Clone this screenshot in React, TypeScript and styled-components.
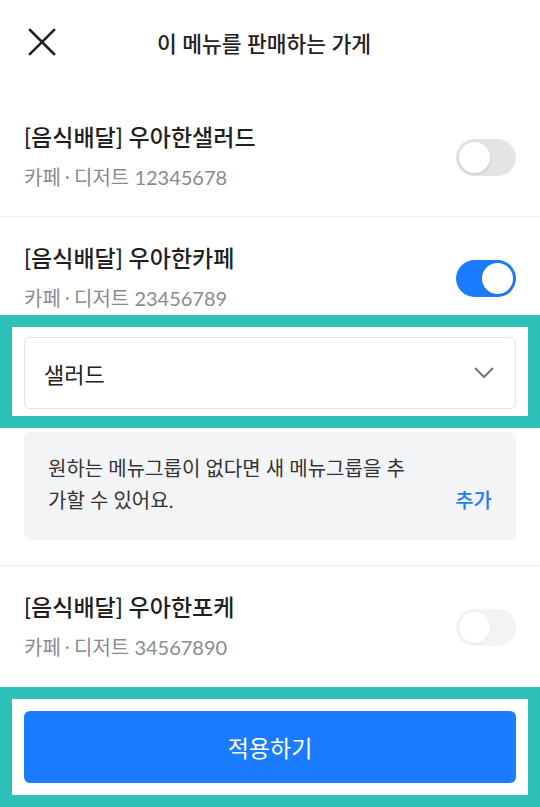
import React from "react";
import styled, { createGlobalStyle } from "styled-components";

const GlobalStyle = createGlobalStyle`
  html, body { margin: 0; padding: 0; background: #fff; }
  body { font-family: Lato, "Noto Sans CJK KR", sans-serif; color: #1f1f1f; }
  * { box-sizing: border-box; }
`;

const Page = styled.div`
  width: 540px;
  height: 807px;
  display: flex;
  flex-direction: column;
  background: #fff;
  overflow: hidden;
`;

const Header = styled.header`
  height: 84px;
  flex-shrink: 0;
  display: flex;
  align-items: center;
  justify-content: center;
  padding-right: 12px;
  position: relative;
`;

const CloseButton = styled.button`
  position: absolute;
  left: 24px;
  top: 24px;
  width: 36px;
  height: 36px;
  padding: 0;
  border: none;
  background: none;
  display: flex;
  align-items: center;
  justify-content: center;
`;

const HeaderTitle = styled.h1`
  margin: 0;
  font-size: 21.5px;
  font-weight: 500;
  color: #222;
`;

const StoreRow = styled.div<{ $divider?: boolean; $pad: string }>`
  flex-shrink: 0;
  display: flex;
  align-items: center;
  justify-content: space-between;
  padding: ${(p) => p.$pad};
  border-bottom: ${(p) => (p.$divider ? "1px solid #eeeeef" : "none")};
`;

const StoreInfo = styled.div`
  display: flex;
  flex-direction: column;
  gap: 10px;
`;

const StoreName = styled.div`
  font-size: 23px;
  font-weight: 500;
  color: #1f1f1f;
  line-height: 30px;
`;

const StoreMeta = styled.div`
  font-size: 20px;
  color: #8b8b8b;
  line-height: 30px;
`;

const Dot = styled.span`
  font-family: "Noto Sans CJK KR", sans-serif;
  margin: 0 1px;
`;

const Track = styled.div<{ $on?: boolean; $disabled?: boolean }>`
  width: 60px;
  height: 37px;
  border-radius: 19px;
  padding: 3px;
  display: flex;
  justify-content: ${(p) => (p.$on ? "flex-end" : "flex-start")};
  background: ${(p) => (p.$on ? "#1b7cff" : p.$disabled ? "#f3f3f4" : "#e4e4e6")};
`;

const Knob = styled.div<{ $disabled?: boolean }>`
  width: 31px;
  height: 31px;
  border-radius: 50%;
  background: #fff;
  box-shadow: ${(p) => (p.$disabled ? "0 1px 3px rgba(0,0,0,0.06)" : "0 1px 3px rgba(0,0,0,0.15)")};
`;

const Highlight = styled.div`
  flex-shrink: 0;
  border: 12px solid #2cc0b9;
  padding: 10px 12px 7px;
  background: #fff;
`;

const Select = styled.div`
  height: 72px;
  border: 1px solid #e3e3e5;
  border-radius: 6px;
  display: flex;
  align-items: center;
  justify-content: space-between;
  padding: 0 21px 0 19px;
  font-size: 22px;
  color: #222;
`;

const InfoBox = styled.div`
  flex-shrink: 0;
  margin: 4px 24px 25px;
  height: 108px;
  border-radius: 6px;
  background: #f3f4f6;
  display: flex;
  align-items: flex-end;
  justify-content: space-between;
  padding: 0 24px 24px;
`;

const InfoText = styled.p`
  margin: 0;
  width: 372px;
  font-size: 20px;
  line-height: 32px;
  color: #333;
  word-break: break-all;
`;

const AddLink = styled.span`
  font-size: 20px;
  line-height: 32px;
  color: #1b7cff;
  font-weight: 500;
`;

const Divider = styled.div`
  flex-shrink: 0;
  height: 1px;
  background: #eeeeef;
`;

const BottomArea = styled.div`
  margin-top: auto;
  flex-shrink: 0;
  border: 12px solid #2cc0b9;
  padding: 12px;
  background: #fff;
`;

const ApplyButton = styled.button`
  width: 100%;
  height: 72px;
  border: none;
  border-radius: 6px;
  background: #1b7cff;
  color: #fff;
  font-family: Lato, "Noto Sans CJK KR", sans-serif;
  font-size: 23px;
  font-weight: 400;
`;

const Toggle = ({ on, disabled }: { on?: boolean; disabled?: boolean }) => (
  <Track $on={on} $disabled={disabled}>
    <Knob $disabled={disabled} />
  </Track>
);

const stores = [
  { name: "[음식배달] 우아한샐러드", id: "12345678" },
  { name: "[음식배달] 우아한카페", id: "23456789" },
  { name: "[음식배달] 우아한포케", id: "34567890" },
];

const Meta = ({ id }: { id: string }) => (
  <StoreMeta>
    카페<Dot>·</Dot>디저트 {id}
  </StoreMeta>
);

export default function App() {
  return (
    <>
      <GlobalStyle />
      <Page>
        <Header>
          <CloseButton aria-label="닫기">
            <svg width="28" height="28" viewBox="0 0 28 28">
              <path d="M2 2 L26 26 M26 2 L2 26" stroke="#222" strokeWidth="2.6" strokeLinecap="square" />
            </svg>
          </CloseButton>
          <HeaderTitle>이 메뉴를 판매하는 가게</HeaderTitle>
        </Header>
        <StoreRow $divider $pad="38px 24px 24px">
          <StoreInfo>
            <StoreName>{stores[0].name}</StoreName>
            <Meta id={stores[0].id} />
          </StoreInfo>
          <Toggle />
        </StoreRow>
        <StoreRow $pad="26px 24px 2px">
          <StoreInfo>
            <StoreName>{stores[1].name}</StoreName>
            <Meta id={stores[1].id} />
          </StoreInfo>
          <Toggle on />
        </StoreRow>
        <Highlight>
          <Select>
            <span>샐러드</span>
            <svg width="20" height="12" viewBox="0 0 20 12">
              <path d="M1 1 L10 10 L19 1" fill="none" stroke="#777" strokeWidth="2" />
            </svg>
          </Select>
        </Highlight>
        <InfoBox>
          <InfoText>원하는 메뉴그룹이 없다면 새 메뉴그룹을 추가할 수 있어요.</InfoText>
          <AddLink>추가</AddLink>
        </InfoBox>
        <Divider />
        <StoreRow $pad="26px 24px 24px">
          <StoreInfo>
            <StoreName>{stores[2].name}</StoreName>
            <Meta id={stores[2].id} />
          </StoreInfo>
          <Toggle disabled />
        </StoreRow>
        <BottomArea>
          <ApplyButton>적용하기</ApplyButton>
        </BottomArea>
      </Page>
    </>
  );
}
